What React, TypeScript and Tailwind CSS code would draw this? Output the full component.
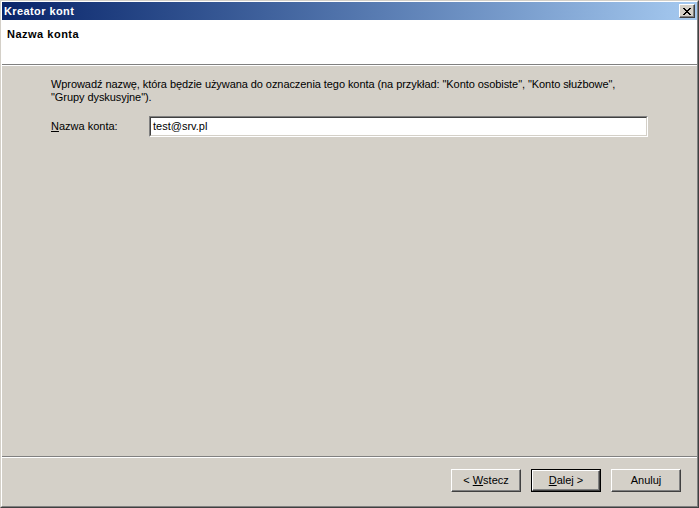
export default function App() {
  const font = "font-['Tahoma','Liberation_Sans',sans-serif] text-[11px] leading-[13px]"

  return (
    <div className={`w-[699px] h-[508px] overflow-hidden bg-[#d4d0c8] text-black ${font}`}>
      <div className="flex flex-col w-full h-full border border-t-[#d4d0c8] border-l-[#d4d0c8] border-r-[#404040] border-b-[#404040]">
        <div className="flex flex-col flex-1 border border-t-white border-l-white border-r-[#808080] border-b-[#808080]">
          {/* title bar */}
          <div className="flex items-center justify-between h-[18px] pl-[2px] pr-[2px] bg-gradient-to-r from-[#0a246a] to-[#a6caf0]">
            <span className="font-bold text-white tracking-[0.4px]">Kreator kont</span>
            <button className="flex items-center justify-center w-[16px] h-[14px] bg-[#d4d0c8] border border-t-white border-l-white border-r-[#404040] border-b-[#404040] shadow-[inset_-1px_-1px_0_#808080]">
              <svg width="8" height="7" viewBox="0 0 8 7" shapeRendering="crispEdges">
                <path d="M0 0h2v1H0zM6 0h2v1H6zM1 1h2v1H1zM5 1h2v1H5zM2 2h4v1H2zM3 3h2v1H3zM2 4h4v1H2zM1 5h2v1H1zM5 5h2v1H5zM0 6h2v1H0zM6 6h2v1H6z" fill="#000" />
              </svg>
            </button>
          </div>

          {/* header */}
          <div className="h-[45px] bg-white pl-[5px] pt-[8px] border-b border-b-[#808080] shadow-[0_1px_0_#fff]">
            <span className="font-bold tracking-[0.5px]">Nazwa konta</span>
          </div>

          {/* body */}
          <div className="flex-1 pl-[49px] pr-[10px] pt-[12px] mt-[1px]">
            <p className="tracking-[-0.07px]">
              Wprowadź nazwę, która będzie używana do oznaczenia tego konta (na przykład: "Konto osobiste", "Konto służbowe",
              <br />
              "Grupy dyskusyjne").
            </p>
            <div className="flex items-center mt-[12px]">
              <label className="w-[98px]">
                <span className="underline">N</span>azwa konta:
              </label>
              <div className="w-[499px] h-[21px] border border-t-[#808080] border-l-[#808080] border-r-white border-b-white">
                <div className="h-full bg-white pl-[2px] flex items-center border border-t-[#404040] border-l-[#404040] border-r-[#d4d0c8] border-b-[#d4d0c8]">
                  test@srv.pl
                </div>
              </div>
            </div>
          </div>

          {/* footer */}
          <div className="border-t border-t-[#808080] shadow-[inset_0_1px_0_#fff] h-[50px] flex items-start justify-end gap-[10px] pr-[16px] pt-[12px]">
            <button className="w-[70px] h-[23px] bg-[#d4d0c8] border border-t-white border-l-white border-r-[#404040] border-b-[#404040] shadow-[inset_-1px_-1px_0_#808080]">
              &lt; <span className="underline">W</span>stecz
            </button>
            <button className="w-[70px] h-[23px] bg-[#d4d0c8] border border-black">
              <div className="w-full h-full flex items-center justify-center border border-t-white border-l-white border-r-[#404040] border-b-[#404040] shadow-[inset_-1px_-1px_0_#808080]">
                <span>
                  <span className="underline">D</span>alej &gt;
                </span>
              </div>
            </button>
            <button className="w-[70px] h-[23px] bg-[#d4d0c8] border border-t-white border-l-white border-r-[#404040] border-b-[#404040] shadow-[inset_-1px_-1px_0_#808080]">
              Anuluj
            </button>
          </div>
        </div>
      </div>
    </div>
  )
}
